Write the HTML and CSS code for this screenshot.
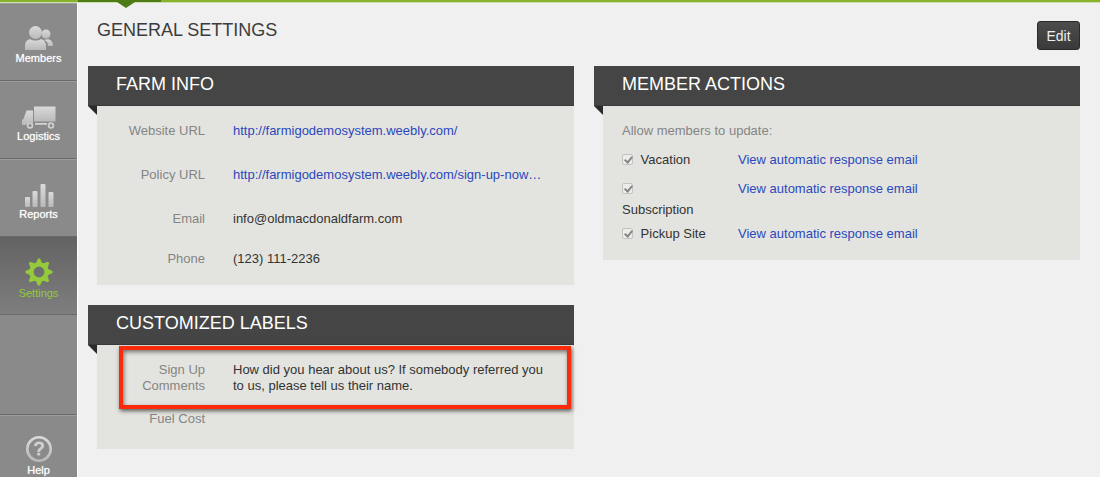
FILE: index.html
```html
<!DOCTYPE html>
<html lang="en">
<head>
<meta charset="utf-8">
<title>General Settings</title>
<link rel="stylesheet" href="styles.css">
</head>
<body>
<div class="topbar"><span class="current"></span></div>
<div class="page">
	<nav class="side">
		<svg class="defs" width="0" height="0" aria-hidden="true">
			<linearGradient id="silver" x1="0" y1="0" x2="0" y2="1">
				<stop offset="0" stop-color="#dadada"/>
				<stop offset="1" stop-color="#b9b9b9"/>
			</linearGradient>
		</svg>
		<a href="#">
			<svg width="41" height="28" viewBox="0 0 41 28" fill="url(#silver)">
				<circle cx="28" cy="11" r="4.5"/>
				<path d="M26 17c5-2 9 0 9 6h-5c0-3-1-5-4-6z"/>
				<circle cx="17.5" cy="9.5" r="6.5"/>
				<path d="M7 27v-4c0-4 2-6 5-7 3 2 8 2 11 0 3 1 5 3 5 7v4z"/>
			</svg>
			<span>Members</span>
		</a>
		<a href="#">
			<svg width="41" height="28" viewBox="0 0 41 28" fill="url(#silver)">
				<path d="M16 5.500h21.500v15H16z"/>
				<path d="M4 24v-5l1.500-1 3-8.500H15v13h-0.500a3.700 3.700 0 0 0-6.200 1.500z"/>
				<path d="M17 22h12v2H17z"/>
				<circle cx="12" cy="24.500" r="2.400" fill="none" stroke="#cfcfcf" stroke-width="1.700"/>
				<circle cx="33" cy="24.500" r="2.400" fill="none" stroke="#cfcfcf" stroke-width="1.700"/>
			</svg>
			<span>Logistics</span>
		</a>
		<a href="#">
			<svg width="41" height="28" viewBox="0 0 41 28" fill="url(#silver)">
				<rect x="7" y="18" width="5" height="10" rx="1"/>
				<rect x="14.500" y="12" width="5" height="16" rx="1"/>
				<rect x="22.500" y="5" width="5" height="23" rx="1"/>
				<rect x="30.500" y="13" width="5" height="15" rx="1"/>
			</svg>
			<span>Reports</span>
		</a>
		<a href="#" class="active">
			<svg width="41" height="28" viewBox="0 0 41 28" fill="#95ca3d">
				<circle cx="21" cy="14" r="7.600" fill="none" stroke="#95ca3d" stroke-width="4.400"/>
				<path id="tooth" d="M17.500 6l2.500-5.500h2L24.500 6z"/>
				<use href="#tooth" transform="rotate(45 21 14)"/>
				<use href="#tooth" transform="rotate(90 21 14)"/>
				<use href="#tooth" transform="rotate(135 21 14)"/>
				<use href="#tooth" transform="rotate(180 21 14)"/>
				<use href="#tooth" transform="rotate(225 21 14)"/>
				<use href="#tooth" transform="rotate(270 21 14)"/>
				<use href="#tooth" transform="rotate(315 21 14)"/>
			</svg>
			<span>Settings</span>
		</a>
		<a href="#" class="help">
			<svg width="41" height="28" viewBox="0 0 41 28">
				<circle cx="21" cy="14" r="11.700" fill="none" stroke="url(#silver)" stroke-width="2.600"/>
				<text x="21" y="20" text-anchor="middle" class="mark">?</text>
			</svg>
			<span>Help</span>
		</a>
	</nav>

	<main class="main">
		<div class="head">
			<h1>GENERAL SETTINGS</h1>
			<button type="button" class="edit">Edit</button>
		</div>
		<div class="cols">
			<div class="col">
				<section class="card">
					<h2>FARM INFO</h2>
					<dl class="box">
						<div class="row tall"><dt>Website URL</dt><dd><a href="#">http://farmigodemosystem.weebly.com/</a></dd></div>
						<div class="row tall"><dt>Policy URL</dt><dd><a href="#">http://farmigodemosystem.weebly.com/sign-up-now…</a></dd></div>
						<div class="row"><dt>Email</dt><dd>info@oldmacdonaldfarm.com</dd></div>
						<div class="row"><dt>Phone</dt><dd>(123) 111-2236</dd></div>
					</dl>
				</section>
				<section class="card">
					<h2>CUSTOMIZED LABELS</h2>
					<dl class="box labels">
						<div class="row marked"><dt>Sign Up Comments</dt><dd>How did you hear about us? If somebody referred you to us, please tell us their name.</dd></div>
						<div class="row"><dt>Fuel Cost</dt><dd></dd></div>
					</dl>
				</section>
			</div>
			<div class="col">
				<section class="card">
					<h2>MEMBER ACTIONS</h2>
					<div class="box actions">
						<p>Allow members to update:</p>
						<div class="action"><label><input type="checkbox" checked disabled> Vacation</label><a href="#">View automatic response email</a></div>
						<div class="action wrap"><label><input type="checkbox" checked disabled> Subscription</label><a href="#">View automatic response email</a></div>
						<div class="action"><label><input type="checkbox" checked disabled> Pickup Site</label><a href="#">View automatic response email</a></div>
					</div>
				</section>
			</div>
		</div>
	</main>
</div>
</body>
</html>
```

FILE: styles.css
```css
*{ margin:0; padding:0; box-sizing:border-box;}
body{ min-height:100vh; display:flex; flex-direction:column; background:#f0f0f0; color:#333; font:13px/16px "Liberation Sans", Arial, sans-serif;}
a{ color:#2b48bd; text-decoration:none;}

.topbar{ height:3px; padding-left:78px; background:#86b22d; border-bottom:1px solid #cfe0a8;}
.current{ display:block; position:relative; width:83px; height:2px; background:#4f7a18;}
.current:after{ content:""; position:absolute; left:39px; top:2px; border:9px solid transparent; border-top:6px solid #4f7a18; border-bottom:0;}

.page{ flex:1; display:flex;}
.side{ width:78px; display:flex; flex-direction:column; background:#8a8a8a; border-right:1px solid #fff;}
.defs{ position:absolute;}
.side a{ height:78px; padding-top:20px; display:flex; flex-direction:column; align-items:center; color:#fff; font-size:11px; line-height:14px; border-bottom:1px solid #6a6a6a; box-shadow:inset 0 1px #9d9d9d; text-shadow:0 0 1px #ddd;}
.side .active{ padding-top:21px; background:linear-gradient(#636363, #7e7e7e); color:#95ca3d; box-shadow:none; text-shadow:none;}
.side .help{ height:auto; margin-top:auto; border-top:1px solid #6a6a6a; border-bottom:0;}
.mark{ font-size:18px; fill:#cfcfcf; stroke:#cfcfcf; stroke-width:.5px;}

.main{ flex:1; padding:15px 20px 20px 10px;}
.head{ height:48px; padding-left:9px; display:flex; justify-content:space-between; align-items:flex-start;}
h1{ font-size:18px; line-height:24px; font-weight:normal; color:#3c3c3c;}
.edit{ width:43px; height:29px; margin-top:3px; font:14px/16px "Liberation Sans", Arial, sans-serif; color:#eee; background:linear-gradient(#4c4c4c, #3a3a3a); border:1px solid #2b2b2b; border-radius:3px;}

.cols{ display:grid; grid-template-columns:1fr 1fr; gap:20px;}
.card{ margin-bottom:20px;}
.card:last-child{ margin-bottom:0;}
.card h2{ position:relative; padding:0 28px; font-size:18px; line-height:36px; height:40px; font-weight:normal; color:#fff; background:#454545; border-bottom:1px solid #3a3a3a;}
/* folded corner under the heading */
.card h2:after{ content:""; position:absolute; left:0; top:40px; border-top:9px solid #2b2b2b; border-left:9px solid transparent;}
.box{ margin-left:9px; padding:17px 22px 18px 0; background:#e3e4df;}
.row{ display:flex; gap:28px; margin-bottom:24px;}
.row:last-child{ margin-bottom:0;}
.tall{ margin-bottom:28px;}
dt{ flex:none; width:108px; padding-left:28px; text-align:right; color:#858585;}
dd{ flex:1;}
.labels{ padding-bottom:22px;}
.marked{ position:relative; margin-bottom:17px;}
.marked:after{ content:""; position:absolute; left:22px; right:-19px; top:-16px; bottom:-15px; border:4px solid #fb2a08; box-shadow:1px 2px 4px rgba(0,0,0,.6), inset 1px 2px 4px rgba(0,0,0,.5);}

.actions{ padding-left:19px; padding-bottom:16px;}
.actions p{ margin-bottom:10px; color:#858585;}
.action{ display:flex; gap:26px; margin-bottom:8px; line-height:21px;}
.action label{ width:90px;}
.wrap{ margin-bottom:3px;}
.action:last-child{ margin-bottom:0;}
input{ appearance:none; position:relative; width:11px; height:11px; margin-right:4px; vertical-align:-1px; background:#ececea; border:1px solid #c3c4c0; border-radius:2px;}
input:checked:after{ content:""; position:absolute; left:3px; top:0; width:3px; height:6px; border:solid #858585; border-width:0 2px 2px 0; transform:rotate(40deg);}
```
